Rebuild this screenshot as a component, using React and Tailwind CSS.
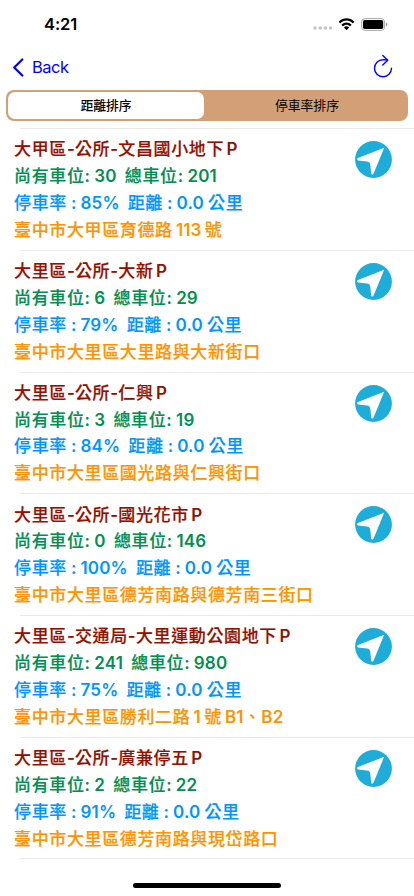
import { Fragment } from 'react';

const LOTS = [
  { name: '大甲區-公所-文昌國小地下 P', free: 30, total: 201, rate: 85, address: '臺中市大甲區育德路 113 號' },
  { name: '大里區-公所-大新 P', free: 6, total: 29, rate: 79, address: '臺中市大里區大里路與大新街口' },
  { name: '大里區-公所-仁興 P', free: 3, total: 19, rate: 84, address: '臺中市大里區國光路與仁興街口' },
  { name: '大里區-公所-國光花市 P', free: 0, total: 146, rate: 100, address: '臺中市大里區德芳南路與德芳南三街口' },
  { name: '大里區-交通局-大里運動公園地下 P', free: 241, total: 980, rate: 75, address: '臺中市大里區勝利二路 1 號 B1、B2' },
  { name: '大里區-公所-廣兼停五 P', free: 2, total: 22, rate: 91, address: '臺中市大里區德芳南路與現岱路口' },
];

// Chinese runs are tracked a little wider than the latin ones.
function Mixed({ text }) {
  return text.split(/([\u3000-\u9fff]+)/).map((part, i) =>
    i % 2 ? (
      <span key={i} className="font-medium tracking-[0.63px] [-webkit-text-stroke:0.2px_currentColor]">{part}</span>
    ) : (
      <Fragment key={i}>{part}</Fragment>
    )
  );
}

function StatusBar() {
  return (
    <div className="flex h-12 items-center justify-between pr-[26px] pl-11">
      <span className="text-[16.5px] font-semibold tracking-[-0.1px]">4:21</span>
      <div className="flex items-center">
        <svg className="mt-2 mr-[5px] h-1 w-5" viewBox="0 0 20 4" fill="#c4c4c4">
          <circle cx="2" cy="2" r="1.8" />
          <circle cx="7.2" cy="2" r="1.8" />
          <circle cx="12.4" cy="2" r="1.8" />
          <circle cx="17.6" cy="2" r="1.8" />
        </svg>
        <svg className="mr-1.5 h-[13px] w-[17px]" viewBox="0 0 17 12" preserveAspectRatio="none">
          <path d="M8.5 2.4c2.3 0 4.4.9 6 2.4.1.1.3.1.4 0l1.2-1.2c.1-.1.1-.3 0-.4C11.9-.9 5.1-.9.9 3.2c-.1.1-.1.3 0 .4l1.2 1.2c.1.1.3.1.4 0 1.6-1.5 3.7-2.4 6-2.4z" />
          <path d="M8.5 6.3c1.2 0 2.4.5 3.3 1.3.1.1.3.1.4 0l1.2-1.2c.1-.1.1-.3 0-.4-2.7-2.6-7-2.6-9.800 0-.1.1-.1.3 0 .4l1.2 1.2c.1.1.3.1.4 0 .9-.8 2.1-1.3 3.3-1.3z" />
          <path d="M10.9 8.9c.1-.1.1-.3 0-.4-1.4-1.2-3.4-1.2-4.8 0-.1.1-.1.3 0 .4l2.2 2.2c.1.1.3.1.4 0z" />
        </svg>
        <svg className="h-[13px] w-[27px]" viewBox="0 0 27 13">
          <rect x="0.6" y="0.6" width="23" height="11.8" rx="3.5" fill="none" stroke="#a6a6a6" />
          <rect x="2" y="2" width="20.2" height="9" rx="1.8" />
          <path d="M25 4.5c.8.4 1.3 1.1 1.3 2s-.5 1.6-1.3 2z" fill="#999" />
        </svg>
      </div>
    </div>
  );
}

function NavBar() {
  return (
    <div className="flex h-[42px] items-center justify-between pr-[21px] pl-3 text-[#0000ff]">
      <button type="button" className="flex h-full items-center pb-1">
        <svg className="mr-2 h-[19px] w-3" viewBox="0 0 12 19" fill="none" stroke="currentColor" strokeWidth="2.2" strokeLinecap="round" strokeLinejoin="round">
          <path d="M10.3 1.5L2.2 9.5l8.1 8" />
        </svg>
        <span className="text-[16.5px] tracking-[-0.5px]">Back</span>
      </button>
      <button type="button" aria-label="Refresh" className="pb-1.5">
        <svg className="h-6 w-5" viewBox="0 0 20 24" fill="none" stroke="currentColor" strokeWidth="1.4" strokeLinecap="round" strokeLinejoin="round">
          <path d="M14.5 6.2Q12.500 5.600 10 5.700A8.500 8.500 0 1 0 18.500 14.200" />
          <path d="M9.800 1.500l4.900 4.800-4.900 4.700" />
        </svg>
      </button>
    </div>
  );
}

function SortTabs() {
  return (
    <div className="mx-1.5 flex h-[31px] rounded-lg bg-[#d39f76] p-0.5 text-[12.8px]">
      <button type="button" className="w-[196px] rounded-[7px] bg-white pt-px font-medium">距離排序</button>
      <button type="button" className="flex-1 pt-px pl-1">停車率排序</button>
    </div>
  );
}

function LotRow({ lot }) {
  return (
    <li className="flex h-[121.75px] pl-3.5">
      <div className="flex-1 pt-[8.4px] text-[17px] leading-[26.8px] font-semibold tracking-[0.15px] whitespace-pre">
        <p className="text-[#941100] [word-spacing:-2px]"><Mixed text={lot.name} /></p>
        <p className="text-[#009051] [word-spacing:-0.3px]"><Mixed text={`尚有車位: ${lot.free}  總車位: ${lot.total}`} /></p>
        <p className="text-[#0096ff] [word-spacing:-0.4px]"><Mixed text={`停車率 : ${lot.rate}%  距離 : 0.0 公里`} /></p>
        <p className="text-[#ff9300] [word-spacing:-1.2px]"><Mixed text={lot.address} /></p>
      </div>
      <svg className="mt-[13px] mr-[22px] size-[37px]" viewBox="0 0 37 37">
        <circle cx="18.5" cy="18.5" r="18.4" fill="#1eadd8" />
        <path d="M29.2 6.7L3 17c-1.2.6-1.100 2.200.2 2.500l8.800.9c2 .2 3.100 1.300 3.300 3.300l.9 8.700c.2 1.500 1.900 1.600 2.400.2z" fill="#fff" />
      </svg>
    </li>
  );
}

export default function App() {
  return (
    <div className="flex h-[896px] w-[414px] flex-col overflow-hidden bg-white font-['Inter','Noto_Sans_CJK_TC',sans-serif] text-black">
      <StatusBar />
      <NavBar />
      <SortTabs />
      <ul className="mt-[7px]">
        {LOTS.map((lot) => (
          <Fragment key={lot.name}>
            <li className="-mb-px ml-5 h-px bg-[#e9e9e9]" />
            <LotRow lot={lot} />
          </Fragment>
        ))}
        <li className="-mt-px ml-5 h-px bg-[#e9e9e9]" />
      </ul>
      <div className="mx-auto mt-auto mb-2 h-[5px] w-[148px] rounded-full bg-black" />
    </div>
  );
}
